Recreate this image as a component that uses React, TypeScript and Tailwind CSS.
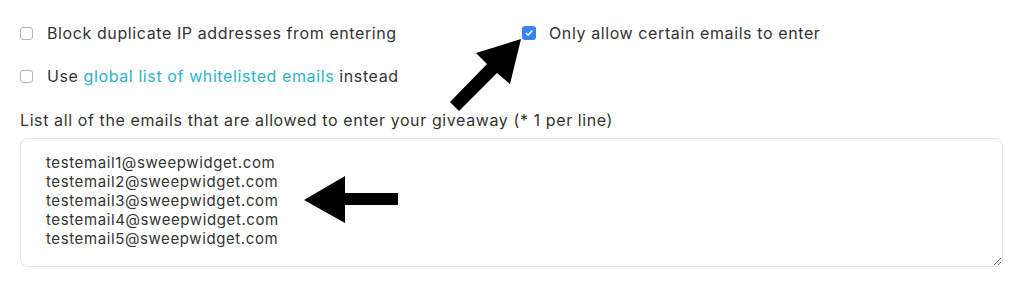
const font = { fontFamily: "Inter, 'Noto Sans', sans-serif" };

const emails = [
  "testemail1@sweepwidget.com",
  "testemail2@sweepwidget.com",
  "testemail3@sweepwidget.com",
  "testemail4@sweepwidget.com",
  "testemail5@sweepwidget.com",
];

const Box = ({ checked }: { checked?: boolean }) =>
  checked ? (
    <span className="flex h-[14px] w-[14px] shrink-0 items-center justify-center rounded-[3px] bg-[#3b82f6]">
      <svg width="10" height="10" viewBox="0 0 10 10">
        <path d="M2.2 5.2 L4.2 7.1 L7.9 2.9" fill="none" stroke="#fff" strokeWidth="1.5" strokeLinecap="round" strokeLinejoin="round" />
      </svg>
    </span>
  ) : (
    <span className="h-[13px] w-[13px] shrink-0 rounded-[3px] border border-[#b5b5b5] bg-white" />
  );

export default function App() {
  return (
    <div className="relative h-[292px] w-[1024px] overflow-hidden bg-white px-5 pt-[21px] text-[16px] tracking-[0.6px] text-[#333]" style={font}>
      <div className="grid grid-cols-2 gap-x-5">
        <label className="flex h-6 items-center gap-[14px]">
          <Box />
          <span>Block duplicate IP addresses from entering</span>
        </label>
        <label className="flex h-6 items-center gap-[13px]">
          <Box checked />
          <span>Only allow certain emails to enter</span>
        </label>
      </div>
      <label className="mt-[19px] flex h-6 items-center gap-[14px]">
        <Box />
        <span>
          Use <a className="text-[#2eb2cc]">global list of whitelisted emails</a> instead
        </span>
      </label>
      <div className="mt-5 h-6 leading-6">
        List all of the emails that are allowed to enter your giveaway (* 1 per line)
      </div>
      <textarea
        readOnly
        value={emails.join("\n")}
        className="mt-[6px] block h-[129px] w-[983px] resize rounded-lg border border-[#e4e4e4] px-[25px] py-[14px] text-[15px] leading-[19px] tracking-[0.6px] text-[#333] outline-none"
        style={font}
      />
      <svg className="pointer-events-none absolute left-0 top-0" width="1024" height="292">
        <polygon points="521,39 510,84 497,73 459,111 450,102 487,64 476,53" fill="#000" />
        <polygon points="304,200 345,176 345,193 398,193 398,205 345,205 345,223" fill="#000" />
      </svg>
    </div>
  );
}
